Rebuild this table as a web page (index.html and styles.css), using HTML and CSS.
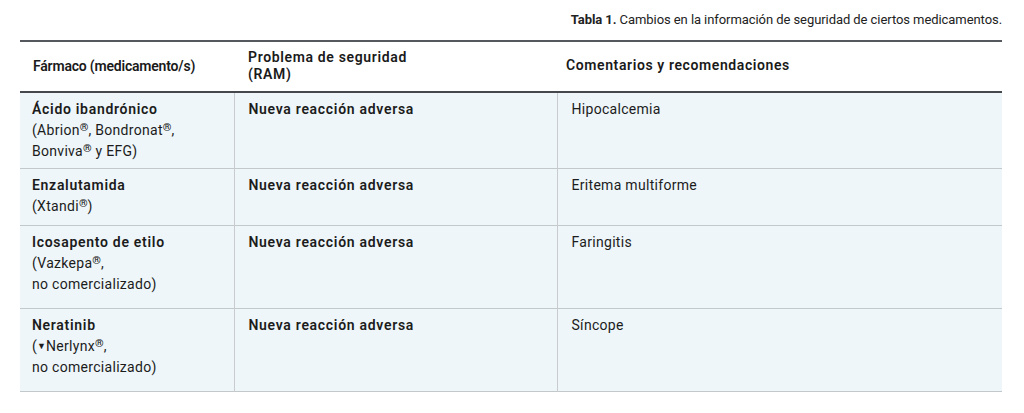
FILE: index.html
```html
<!DOCTYPE html>
<html lang="es">
<head>
<meta charset="utf-8">
<title>Tabla 1</title>
<link rel="stylesheet" href="styles.css">
</head>
<body>
<div class="page">
  <p class="caption"><strong>Tabla 1.</strong> Cambios en la información de seguridad de ciertos medicamentos.</p>
  <table class="drug-table">
    <colgroup>
      <col class="col-drug">
      <col class="col-problem">
      <col class="col-comment">
    </colgroup>
    <thead>
      <tr>
        <th class="h-drug">Fármaco (medicamento/s)</th>
        <th class="h-problem">Problema de seguridad<br>(RAM)</th>
        <th class="h-comment">Comentarios y recomendaciones</th>
      </tr>
    </thead>
    <tbody>
      <tr class="row-a">
        <td><strong>Ácido ibandrónico</strong><br>(Abrion<sup>®</sup>, Bondronat<sup>®</sup>,<br>Bonviva<sup>®</sup> y EFG)</td>
        <td><strong>Nueva reacción adversa</strong></td>
        <td>Hipocalcemia</td>
      </tr>
      <tr class="row-b">
        <td><strong>Enzalutamida</strong><br>(Xtandi<sup>®</sup>)</td>
        <td><strong>Nueva reacción adversa</strong></td>
        <td>Eritema multiforme</td>
      </tr>
      <tr class="row-c">
        <td><strong>Icosapento de etilo</strong><br>(Vazkepa<sup>®</sup>,<br>no comercializado)</td>
        <td><strong>Nueva reacción adversa</strong></td>
        <td>Faringitis</td>
      </tr>
      <tr class="row-c">
        <td><strong>Neratinib</strong><br>(<span class="tri">▼</span>Nerlynx<sup>®</sup>,<br>no comercializado)</td>
        <td><strong>Nueva reacción adversa</strong></td>
        <td>Síncope</td>
      </tr>
    </tbody>
  </table>
</div>
</body>
</html>
```

FILE: styles.css
```css
html, body {
  margin: 0;
  padding: 0;
  background: #ffffff;
}

body {
  font-family: Roboto, "Liberation Sans", Arial, sans-serif;
  color: #1c1c1c;
}

.page {
  width: 982px;
  margin-left: 20px;
}

.caption {
  margin: 0;
  height: 40px;
  box-sizing: border-box;
  padding-top: 11px;
  text-align: right;
  font-size: 13px;
  line-height: 17px;
  color: #222;
  letter-spacing: -0.07px;
}

.caption strong {
  font-weight: 700;
}

.drug-table {
  width: 982px;
  border-collapse: collapse;
  table-layout: fixed;
  font-size: 14px;
}

.col-drug { width: 214px; }
.col-problem { width: 323px; }
.col-comment { width: 445px; }

.drug-table thead tr {
  border-top: 2px solid #55595d;
  border-bottom: 2px solid #45494d;
}

.drug-table th {
  height: 47px;
  text-align: left;
  vertical-align: middle;
  font-weight: 600;
  line-height: 17px;
  color: #1a1a1a;
  padding: 0;
  letter-spacing: 0.4px;
}

.drug-table th.h-drug { padding-left: 13px; letter-spacing: -0.2px; }
.drug-table th.h-problem { padding-left: 14px; padding-bottom: 2px; letter-spacing: 0.65px; }
.drug-table th.h-comment { padding-left: 9px; padding-bottom: 2px; letter-spacing: 0.6px; }

.drug-table tbody tr {
  background: #eef6f9;
  border-bottom: 1px solid #c3c8cb;
}

.drug-table td {
  vertical-align: top;
  line-height: 21px;
  padding: 6px 14px 0 14px;
  color: #1c1c1c;
  letter-spacing: 0.3px;
}

.drug-table td:first-child {
  padding-left: 12px;
}

.drug-table td + td {
  border-left: 1px solid #c8cccf;
}

.drug-table td strong {
  font-weight: 600;
  letter-spacing: 0.7px;
}

.row-a td { height: 69px; }
.row-b td { height: 50px; }
.row-c td { height: 76px; }

sup {
  font-size: 11px;
  font-weight: 700;
  line-height: 0;
  vertical-align: 4px;
  letter-spacing: 0;
}

.tri {
  font-size: 9px;
  vertical-align: 2px;
  letter-spacing: 0;
}
```
